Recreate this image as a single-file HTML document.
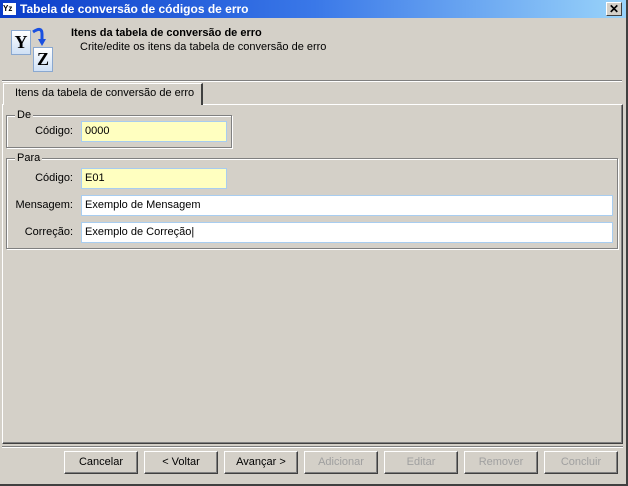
<!DOCTYPE html>
<html><head><meta charset="utf-8"><style>
*{box-sizing:border-box;margin:0;padding:0}
body{width:628px;height:486px;background:#d4d0c8;font-family:"Liberation Sans",sans-serif;font-size:11px;color:#000;position:relative;overflow:hidden}
.a{position:absolute}
.title{left:0;top:0;width:628px;height:18px;background:linear-gradient(90deg,#0a3cc8 0%,#3a78e8 50%,#9ad4fa 100%);color:#fff;font-weight:bold;font-size:12px;line-height:18px;padding-left:20px}
.etched{border-top:1px solid #808080;border-bottom:1px solid #fff;height:2px}
.grp{border:1px solid #808080;box-shadow:1px 1px 0 #fff inset,1px 1px 0 #fff}
.leg{background:#d4d0c8;padding:0 2px;line-height:12px}
.inp{border:1px solid #a8cdf0;background:#fff;height:21px;line-height:19px;padding-left:3px}
.y{background:#ffffc0}
.lbl{text-align:right;width:68px;line-height:20px}
.btn{top:451px;width:74px;height:23px;border:1px solid;border-color:#fff #404040 #404040 #fff;box-shadow:inset -1px -1px 0 #808080;text-align:center;line-height:21px}
.dis{color:#a0a0a0}
</style></head><body>
<div class="a title">Tabela de conversão de códigos de erro</div>
<div class="a" style="left:3px;top:3px;width:13px;height:12px;background:#fff;font-size:8px;color:#000;line-height:12px;font-weight:bold">Yz</div>
<div class="a" style="left:606px;top:2px;width:16px;height:14px;background:#d4d0c8;border:1px solid;border-color:#fff #404040 #404040 #fff;font-size:12px;line-height:12px;text-align:center;font-weight:bold">✕</div>
<div class="a" style="left:626px;top:0;width:2px;height:486px;background:#404040"></div>
<div class="a" style="left:0;top:484px;width:628px;height:2px;background:#404040"></div>
<!-- icon -->
<div class="a" style="left:11px;top:30px;width:20px;height:25px;background:linear-gradient(#fff,#cfe0f5);border:1px solid #8aa8d0;font:bold 18px 'Liberation Serif',serif;text-align:center;line-height:23px">Y</div>
<div class="a" style="left:33px;top:47px;width:20px;height:25px;background:linear-gradient(#fff,#cfe0f5);border:1px solid #8aa8d0;font:bold 18px 'Liberation Serif',serif;text-align:center;line-height:23px">Z</div>
<svg class="a" style="left:30px;top:26px" width="20" height="22"><path d="M3 6 Q12 0 12 8 L12 15" stroke="#1a50e0" stroke-width="3" fill="none"/><path d="M8 13 L12 20 L16 13 Z" fill="#1a50e0"/></svg>
<div class="a" style="left:71px;top:27px;font-weight:bold">Itens da tabela de conversão de erro</div>
<div class="a" style="left:80px;top:41px">Crite/edite os itens da tabela de conversão de erro</div>
<div class="a etched" style="left:2px;top:80px;width:620px"></div>
<!-- tab -->
<div class="a" style="left:3px;top:83px;width:200px;height:22px;border-top:1px solid #fff;border-left:1px solid #fff;border-right:2px solid #404040;background:#d4d0c8;padding-left:11px;line-height:19px;z-index:2">Itens da tabela de conversão de erro</div>
<div class="a" style="left:2px;top:104px;width:621px;height:340px;border:1px solid;border-color:#fff #404040 #404040 #fff;box-shadow:inset -1px -1px 0 #808080"></div>
<!-- De -->
<div class="a grp" style="left:6px;top:115px;width:226px;height:33px"></div>
<div class="a leg" style="left:15px;top:109px">De</div>
<div class="a lbl" style="left:5px;top:121px">Código:</div>
<div class="a inp y" style="left:81px;top:121px;width:146px">0000</div>
<!-- Para -->
<div class="a grp" style="left:6px;top:158px;width:612px;height:91px"></div>
<div class="a leg" style="left:15px;top:152px">Para</div>
<div class="a lbl" style="left:5px;top:168px">Código:</div>
<div class="a inp y" style="left:81px;top:168px;width:146px">E01</div>
<div class="a lbl" style="left:5px;top:195px">Mensagem:</div>
<div class="a inp" style="left:81px;top:195px;width:532px">Exemplo de Mensagem</div>
<div class="a lbl" style="left:5px;top:222px">Correção:</div>
<div class="a inp" style="left:81px;top:222px;width:532px">Exemplo de Correção|</div>
<div class="a etched" style="left:2px;top:446px;width:621px"></div>
<div class="a btn" style="left:64px">Cancelar</div>
<div class="a btn" style="left:144px">&lt; Voltar</div>
<div class="a btn" style="left:224px">Avançar &gt;</div>
<div class="a btn dis" style="left:304px">Adicionar</div>
<div class="a btn dis" style="left:384px">Editar</div>
<div class="a btn dis" style="left:464px">Remover</div>
<div class="a btn dis" style="left:544px">Concluir</div>
</body></html>
